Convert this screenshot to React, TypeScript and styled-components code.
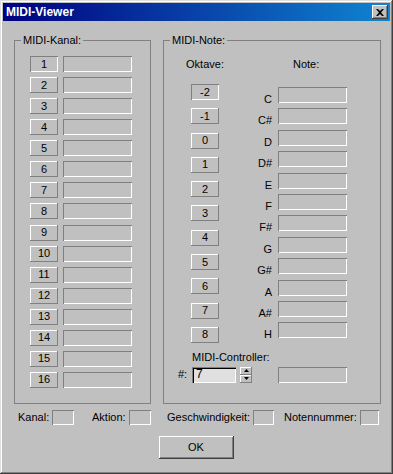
import React from "react";
import styled, { createGlobalStyle } from "styled-components";

const GlobalStyle = createGlobalStyle`
    html, body {
        margin: 0;
        padding: 0;
        background: #c0c0c0;
    }
    body {
        font-family: "Liberation Sans", Arial, sans-serif;
        font-size: 11px;
        color: #000;
    }
`

const raised = `
    box-shadow: inset -1px -1px #808080, inset 1px 1px #ffffff;
`

const sunken = `
    box-shadow: inset 1px 1px #808080, inset -1px -1px #ffffff;
`

const Window = styled.div`
    width: 393px;
    height: 474px;
    box-sizing: border-box;
    padding: 3px;
    background: #c0c0c0;
    display: flex;
    flex-direction: column;
    box-shadow: inset -1px -1px #404040, inset 1px 1px #dfdfdf,
        inset -2px -2px #808080, inset 2px 2px #ffffff;
`

const TitleBar = styled.div`
    height: 18px;
    display: flex;
    align-items: center;
    justify-content: space-between;
    padding: 0 2px 0 3px;
    background: linear-gradient(90deg, #000080, #1084d0);
    color: #fff;
    font-weight: bold;
    font-size: 12px;
`

const CloseButton = styled.div`
    width: 16px;
    height: 14px;
    background: #c0c0c0;
    display: flex;
    align-items: center;
    justify-content: center;
    box-shadow: inset -1px -1px #404040, inset 1px 1px #ffffff, inset -2px -2px #808080;
`

const Groups = styled.div`
    display: flex;
    gap: 12px;
    padding: 13px 0 0 11px;
`

const Group = styled.fieldset<{ $w: number }>`
    width: ${p => p.$w}px;
    height: 370px;
    box-sizing: border-box;
    margin: 0;
    padding: 0;
    border: 1px solid #808080;
    min-width: 0;
`

const Legend = styled.legend`
    margin-left: 6px;
    padding: 0 2px;
    line-height: 13px;
`

const KanalList = styled.div`
    display: flex;
    flex-direction: column;
    gap: 5.07px;
    padding: 9px 0 0 15px;
`

const Row = styled.div`
    display: flex;
    align-items: flex-end;
`

const Button = styled.div<{ $pressed?: boolean; $w?: number; $h?: number }>`
    width: ${p => p.$w ?? 28}px;
    height: ${p => p.$h ?? 16}px;
    box-sizing: border-box;
    display: flex;
    align-items: center;
    justify-content: center;
    line-height: 13px;
    background: #c0c0c0;
    ${p => (p.$pressed ? sunken : raised)}
`

const Field = styled.div<{ $w?: number; $h?: number }>`
    width: ${p => p.$w ?? 69}px;
    height: ${p => p.$h ?? 16}px;
    box-sizing: border-box;
    ${sunken}
`

const KanalRow = styled(Row)`
    gap: 5px;
`

const NoteBody = styled.div`
    padding: 11px 0 0 14px;
`

const Columns = styled.div`
    display: flex;
    align-items: flex-start;
`

const OctaveCol = styled.div`
    width: 54px;
    display: flex;
    flex-direction: column;
    align-items: center;
`

const Heading = styled.div<{ $pl?: number }>`
    line-height: 13px;
    padding-left: ${p => p.$pl ?? 0}px;
`

const OctaveList = styled.div`
    display: flex;
    flex-direction: column;
    gap: 8.3px;
    margin-top: 13px;
`

const NoteCol = styled.div`
    margin-left: 4px;
    display: flex;
    flex-direction: column;
`

const NoteList = styled.div`
    display: flex;
    flex-direction: column;
    gap: 5.4px;
    margin-top: 16px;
`

const NoteRow = styled(Row)`
    gap: 6px;
`

const NoteLabel = styled.div`
    width: 36px;
    text-align: right;
    line-height: 13px;
    margin-bottom: -3px;
`

const ControllerLabel = styled.div`
    line-height: 13px;
    padding-left: 14px;
    margin-top: 8px;
`

const ControllerRow = styled.div`
    display: flex;
    align-items: center;
    margin-top: 3px;
`

const Hash = styled.div`
    width: 14px;
    line-height: 13px;
`

const NumberInput = styled.div`
    width: 44px;
    height: 16px;
    box-sizing: border-box;
    padding: 1px 0 0 4px;
    line-height: 13px;
    font-size: 12px;
    background: #e0e0e0;
    box-shadow: inset 1px 1px #808080, inset 2px 2px #000000,
        inset -1px -1px #ffffff, inset -2px -2px #dfdfdf;
`

const Spinner = styled.div`
    width: 12px;
    height: 16px;
    margin: 0 26px 0 4px;
    display: flex;
    flex-direction: column;
`

const SpinHalf = styled.div`
    flex: 1;
    display: flex;
    align-items: center;
    justify-content: center;
    background: #c0c0c0;
    ${raised}
`

const StatusRow = styled.div`
    display: flex;
    margin-top: 6px;
    padding-left: 15px;
`

const StatusItem = styled.div<{ $w: number; $ml: number }>`
    width: ${p => p.$w}px;
    margin-left: ${p => p.$ml}px;
    display: flex;
    align-items: center;
    justify-content: flex-end;
    gap: 3px;
    line-height: 15px;
`

const OkButton = styled(Button)`
    align-self: center;
    margin-top: 11px;
    margin-left: -1px;
    box-shadow: inset -1px -1px #404040, inset 1px 1px #ffffff, inset -2px -2px #808080;
`

const channels = Array.from({ length: 16 }, (_, i) => i + 1);
const octaves = [-2, -1, 0, 1, 2, 3, 4, 5, 6, 7, 8];
const notes = ["C", "C#", "D", "D#", "E", "F", "F#", "G", "G#", "A", "A#", "H"];

const status = [
    { label: "Kanal:", w: 56, ml: 0 },
    { label: "Aktion:", w: 59, ml: 18 },
    { label: "Geschwindigkeit:", w: 107, ml: 16 },
    { label: "Notennummer:", w: 95, ml: 10 },
];

const Arrow: React.FC<{ up?: boolean }> = ({ up }) => (
    <svg width="5" height="3" viewBox="0 0 5 3">
        <path d={up ? "M2.5 0 L5 3 L0 3 Z" : "M0 0 L5 0 L2.5 3 Z"} fill="#000" />
    </svg>
);

const App: React.FC = () => {
    return (
        <Window>
            <GlobalStyle />
            <TitleBar>
                <span>MIDI-Viewer</span>
                <CloseButton>
                    <svg width="8" height="7" viewBox="0 0 8 7">
                        <path d="M0 0 L2 0 L4 2 L6 0 L8 0 L5 3.5 L8 7 L6 7 L4 5 L2 7 L0 7 L3 3.5 Z" fill="#000" />
                    </svg>
                </CloseButton>
            </TitleBar>
            <Groups>
                <Group $w={137}>
                    <Legend>MIDI-Kanal:</Legend>
                    <KanalList>
                        {channels.map(c => (
                            <KanalRow key={c}>
                                <Button $pressed={c === 1}>{c}</Button>
                                <Field />
                            </KanalRow>
                        ))}
                    </KanalList>
                </Group>
                <Group $w={218}>
                    <Legend>MIDI-Note:</Legend>
                    <NoteBody>
                        <Columns>
                            <OctaveCol>
                                <Heading>Oktave:</Heading>
                                <OctaveList>
                                    {octaves.map(o => (
                                        <Button key={o} $pressed={o === -2}>{o}</Button>
                                    ))}
                                </OctaveList>
                            </OctaveCol>
                            <NoteCol>
                                <Heading $pl={57}>Note:</Heading>
                                <NoteList>
                                    {notes.map(n => (
                                        <NoteRow key={n}>
                                            <NoteLabel>{n}</NoteLabel>
                                            <Field />
                                        </NoteRow>
                                    ))}
                                </NoteList>
                            </NoteCol>
                        </Columns>
                        <ControllerLabel>MIDI-Controller:</ControllerLabel>
                        <ControllerRow>
                            <Hash>#:</Hash>
                            <NumberInput>7</NumberInput>
                            <Spinner>
                                <SpinHalf><Arrow up /></SpinHalf>
                                <SpinHalf><Arrow /></SpinHalf>
                            </Spinner>
                            <Field />
                        </ControllerRow>
                    </NoteBody>
                </Group>
            </Groups>
            <StatusRow>
                {status.map(s => (
                    <StatusItem key={s.label} $w={s.w} $ml={s.ml}>
                        <span>{s.label}</span>
                        <Field $w={23} $h={15} />
                    </StatusItem>
                ))}
            </StatusRow>
            <OkButton $w={75} $h={23}>OK</OkButton>
        </Window>
    );
};

export default App;
